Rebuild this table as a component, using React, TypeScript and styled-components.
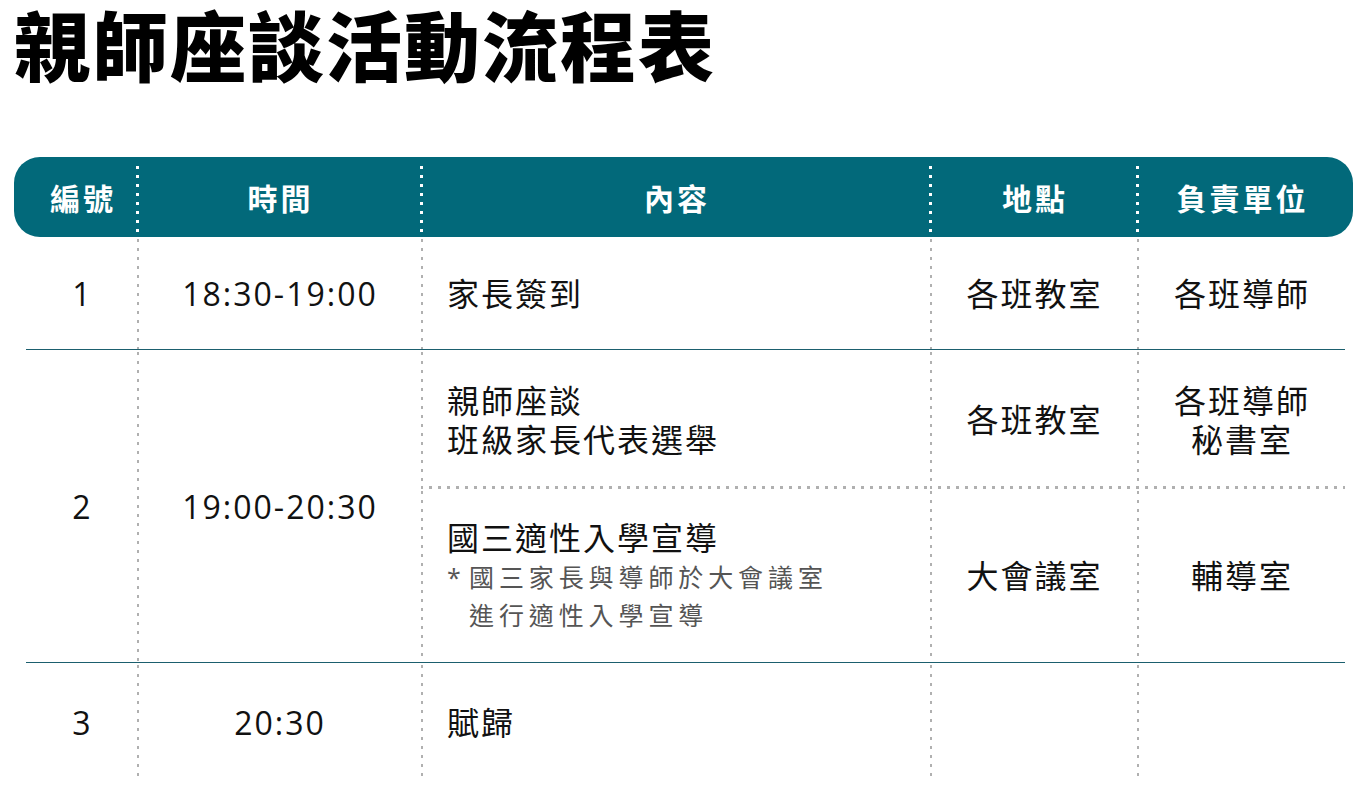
import React from 'react';
import styled, { createGlobalStyle, css } from 'styled-components';

const TEAL = '#02697a';
const RULE = '#1b5f6e';
const DOT = '#b0b0b0';
const COLS = '111px 284px 509px 207px 208px';

const GlobalStyle = createGlobalStyle`
  html, body {
    margin: 0;
    padding: 0;
    background: #fff;
  }
  body {
    font-family: "Open Sans", "Noto Sans CJK TC", sans-serif;
    color: #111;
  }
`;

const Page = styled.div`
  width: 1370px;
  padding: 0 17px 9px 14px;
  box-sizing: border-box;
`;

const Title = styled.h1`
  margin: 0;
  font-family: "Noto Sans CJK TC", sans-serif;
  font-size: 76px;
  line-height: 86px;
  font-weight: 900;
  letter-spacing: 2px;
  color: #000;
`;

const Header = styled.div`
  margin-top: 71px;
  height: 80px;
  padding: 0 12px;
  border-radius: 26px;
  background: ${TEAL};
  display: grid;
  grid-template-columns: ${COLS};
`;

const HeadCell = styled.div<{ $divider?: boolean }>`
  position: relative;
  display: flex;
  align-items: center;
  justify-content: center;
  padding-left: 3px;
  color: #fff;
  font-family: "Noto Sans CJK TC", sans-serif;
  font-size: 30px;
  font-weight: 700;
  letter-spacing: 3px;

  ${(p) =>
    p.$divider &&
    css`
      &::before {
        content: '';
        position: absolute;
        left: -1px;
        top: 9px;
        bottom: 0;
        width: 3px;
        background-image: linear-gradient(#fff 3px, transparent 3px);
        background-size: 3px 9px;
        background-repeat: repeat-y;
      }
    `}
`;

const Body = styled.div`
  margin: 0 12px;
  display: grid;
  grid-template-columns: ${COLS};
  grid-template-rows: 113px 139px 174px 119px;
`;

type Rule = 'line' | 'dots';

const backdrop = (divider?: boolean, rule?: Rule) => {
  const layers: { img: string; size: string; pos: string; rep: string }[] = [];
  if (divider)
    layers.push({
      img: `linear-gradient(${DOT} 3px, transparent 3px)`,
      size: '3px 9px',
      pos: '-1px 2px',
      rep: 'repeat-y',
    });
  if (rule === 'dots')
    layers.push({
      img: `linear-gradient(to right, ${DOT} 3px, transparent 3px)`,
      size: '9px 3px',
      pos: '-1px 100%',
      rep: 'repeat-x',
    });
  if (!layers.length) return css``;
  return css`
    background-image: ${layers.map((l) => l.img).join(', ')};
    background-size: ${layers.map((l) => l.size).join(', ')};
    background-position: ${layers.map((l) => l.pos).join(', ')};
    background-repeat: ${layers.map((l) => l.rep).join(', ')};
  `;
};

const Cell = styled.div<{
  $divider?: boolean;
  $rule?: Rule;
  $left?: boolean;
  $span?: number;
}>`
  box-sizing: border-box;
  display: flex;
  flex-direction: column;
  justify-content: center;
  align-items: ${(p) => (p.$left ? 'flex-start' : 'center')};
  padding-left: ${(p) => (p.$left ? '26px' : '2px')};
  grid-row: ${(p) => (p.$span ? `span ${p.$span}` : 'auto')};
  border-bottom: ${(p) => (p.$rule === 'line' ? `1px solid ${RULE}` : 'none')};
  font-size: 32px;
  line-height: 39px;
  letter-spacing: 2px;
  ${(p) => backdrop(p.$divider, p.$rule)}
`;

const Note = styled.div`
  display: flex;
  margin-top: 1px;
  color: #555;
  font-size: 25px;
  line-height: 38px;
  letter-spacing: 4.9px;
`;

const Star = styled.span`
  width: 22px;
  flex: none;
  letter-spacing: 0;
`;

const NoteText = styled.div``;

export default function App() {
  return (
    <Page>
      <GlobalStyle />
      <Title>親師座談活動流程表</Title>

      <Header>
        <HeadCell>編號</HeadCell>
        <HeadCell $divider>時間</HeadCell>
        <HeadCell $divider>內容</HeadCell>
        <HeadCell $divider>地點</HeadCell>
        <HeadCell $divider>負責單位</HeadCell>
      </Header>

      <Body>
        <Cell $rule="line">1</Cell>
        <Cell $rule="line" $divider>18:30-19:00</Cell>
        <Cell $rule="line" $divider $left>家長簽到</Cell>
        <Cell $rule="line" $divider>各班教室</Cell>
        <Cell $rule="line" $divider>各班導師</Cell>

        <Cell $rule="line" $span={2}>2</Cell>
        <Cell $rule="line" $divider $span={2}>19:00-20:30</Cell>
        <Cell $rule="dots" $divider $left>
          <div>親師座談</div>
          <div>班級家長代表選舉</div>
        </Cell>
        <Cell $rule="dots" $divider>各班教室</Cell>
        <Cell $rule="dots" $divider>
          <div>各班導師</div>
          <div>秘書室</div>
        </Cell>
        <Cell $rule="line" $divider $left>
          <div>國三適性入學宣導</div>
          <Note>
            <Star>*</Star>
            <NoteText>
              國三家長與導師於大會議室
              <br />
              進行適性入學宣導
            </NoteText>
          </Note>
        </Cell>
        <Cell $rule="line" $divider>大會議室</Cell>
        <Cell $rule="line" $divider>輔導室</Cell>

        <Cell>3</Cell>
        <Cell $divider>20:30</Cell>
        <Cell $divider $left>賦歸</Cell>
        <Cell $divider />
        <Cell $divider />
      </Body>
    </Page>
  );
}
